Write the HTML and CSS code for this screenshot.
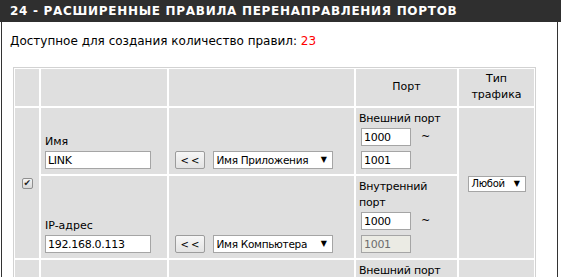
FILE: index.html
```html
<!DOCTYPE html>
<html lang="ru">
<head>
    <meta charset="UTF-8">
    <meta name="viewport" content="width=device-width, initial-scale=1.0">
    <title>Расширенные правила перенаправления портов</title>
    <link rel="stylesheet" href="styles.css">
</head>
<body>
    <div class="box-title">24 - РАСШИРЕННЫЕ ПРАВИЛА ПЕРЕНАПРАВЛЕНИЯ ПОРТОВ</div>
    <div class="box">
        <p class="count">Доступное для создания количество правил: <span class="count-num">23</span></p>

        <table class="rules">
            <tr class="head">
                <td class="w-check"></td>
                <td class="w-name"></td>
                <td class="w-pick"></td>
                <td class="w-port">Порт</td>
                <td class="w-type">Тип<br>трафика</td>
            </tr>

            <!-- rule 1 -->
            <tr>
                <td class="c-check" rowspan="2"><span class="check is-checked"></span></td>
                <td class="c-name">
                    <div class="label">Имя</div>
                    <input class="field field-name" type="text" value="LINK">
                </td>
                <td class="c-pick">
                    <button class="btn">&lt;&lt;</button>
                    <div class="select select-wide"><span>Имя Приложения</span><span class="arrow">▼</span></div>
                </td>
                <td class="c-port">
                    <div class="label">Внешний порт</div>
                    <div class="port-line"><input class="field field-port" type="text" value="1000"><span class="tilde">~</span></div>
                    <input class="field field-port port-end" type="text" value="1001">
                </td>
                <td class="c-type" rowspan="2">
                    <div class="select select-small"><span>Любой</span><span class="arrow">▼</span></div>
                </td>
            </tr>
            <tr>
                <td class="c-name">
                    <div class="label">IP-адрес</div>
                    <input class="field field-name" type="text" value="192.168.0.113">
                </td>
                <td class="c-pick">
                    <button class="btn">&lt;&lt;</button>
                    <div class="select select-wide"><span>Имя Компьютера</span><span class="arrow">▼</span></div>
                </td>
                <td class="c-port">
                    <div class="label">Внутренний<br>порт</div>
                    <div class="port-line"><input class="field field-port" type="text" value="1000"><span class="tilde">~</span></div>
                    <input class="field field-port port-end" type="text" value="1001" disabled>
                </td>
            </tr>

            <!-- rule 2 -->
            <tr>
                <td class="c-check" rowspan="2"><span class="check"></span></td>
                <td class="c-name">
                    <div class="label">Имя</div>
                    <input class="field field-name" type="text" value="">
                </td>
                <td class="c-pick">
                    <button class="btn">&lt;&lt;</button>
                    <div class="select select-wide"><span>Имя Приложения</span><span class="arrow">▼</span></div>
                </td>
                <td class="c-port">
                    <div class="label">Внешний порт</div>
                    <div class="port-line"><input class="field field-port" type="text" value=""><span class="tilde">~</span></div>
                    <input class="field field-port port-end" type="text" value="">
                </td>
                <td class="c-type" rowspan="2">
                    <div class="select select-small"><span>Любой</span><span class="arrow">▼</span></div>
                </td>
            </tr>
        </table>
    </div>
</body>
</html>
```

FILE: styles.css
```css
/* page */
html, body {
    margin: 0;
    overflow: hidden;
    background-color: #fff;
}

body {
    font-family: "DejaVu Sans", sans-serif;
    font-size: 11px;
    color: #000;
}

.box-title {
    height: 22px;
    line-height: 22px;
    padding-left: 10px;
    background-color: #2f2f2f;
    color: #fff;
    font-weight: bold;
    font-size: 12px;
    letter-spacing: 0.7px;
}

.box {
    margin-left: 1px;
    width: 539px;
    height: 260px;
    padding: 0 8px;
    border-left: 1px solid #333;
    border-right: 1px solid #333;
}

.count {
    margin: 0;
    padding-top: 12px;
    line-height: 15px;
    font-size: 12px;
}

.count-num {
    color: #f00;
}

/* rules table */
.rules {
    margin: 18px 0 0 3px;
    width: 523px;
    border: 1px solid #d2d2d2;
    border-collapse: separate;
    border-spacing: 0;
    table-layout: fixed;
}

.rules td {
    box-sizing: border-box;
    background-color: #dfdfdf;
    border: 1px solid #fff;
    padding: 3px 4px 5px;
    vertical-align: bottom;
    line-height: 16px;
}

.head td {
    padding: 2px 4px 3px;
    text-align: center;
    vertical-align: middle;
}

.w-check { width: 26px; }
.w-name { width: 128px; }
.w-pick { width: 187px; }
.w-port { width: 103px; }
.w-type { width: 77px; }

.c-check, .c-type {
    text-align: center;
    vertical-align: middle !important;
}

.c-check {
    padding-top: 5px !important;
}

.c-type {
    padding-top: 6px !important;
}

.c-port {
    vertical-align: top !important;
    padding-left: 3px !important;
    letter-spacing: -0.2px;
}

.c-pick {
    padding-left: 6px !important;
    white-space: nowrap;
}

.label {
    line-height: 16px;
}

.c-name .label {
    margin-bottom: 1px;
}

/* controls */
.field {
    display: block;
    box-sizing: border-box;
    height: 18px;
    margin: 0;
    padding: 0 2px;
    border: 1px solid #a5a5a5;
    background-color: #fff;
    font-family: "DejaVu Sans", sans-serif;
    font-size: 11px;
    letter-spacing: -0.3px;
    color: #000;
}

.field:disabled {
    background-color: #ebebe4;
    color: #6d6d6d;
}

.field-name { width: 106px; }

.field-port {
    width: 50px;
    margin-left: 2px;
}

.port-line {
    display: flex;
    align-items: center;
    margin-top: 1px;
}

.tilde {
    margin-left: 10px;
}

.port-end {
    margin-top: 5px;
}

.btn {
    display: inline-block;
    vertical-align: bottom;
    box-sizing: border-box;
    width: 30px;
    height: 18px;
    margin: 0;
    padding: 0;
    border: 1px solid #9c9c9c;
    border-radius: 2px;
    background: linear-gradient(#f7f7f7, #e3e3e3);
    font-family: "DejaVu Sans", sans-serif;
    font-size: 10px;
    letter-spacing: 2px;
    text-indent: 2px;
    color: #000;
}

.select {
    display: inline-flex;
    align-items: center;
    justify-content: space-between;
    vertical-align: bottom;
    box-sizing: border-box;
    height: 18px;
    padding: 0 5px 0 3px;
    border: 1px solid #a5a5a5;
    background-color: #fff;
    line-height: 16px;
    font-size: 10.5px;
    letter-spacing: -0.3px;
}

.select-wide {
    width: 120px;
    margin-left: 4px;
}

.select-small {
    width: 58px;
    height: 16px;
    font-size: 10px;
}

.arrow {
    font-size: 8px;
}

.check {
    display: inline-block;
    vertical-align: middle;
    box-sizing: border-box;
    width: 11px;
    height: 11px;
    border: 1px solid #8f8f8f;
    border-radius: 2px;
    background: linear-gradient(#f4f4f4, #d8d8d8);
    position: relative;
}

.check.is-checked::after {
    content: "✔";
    position: absolute;
    left: 1px;
    top: -4px;
    font-size: 9px;
    color: #222;
}
```
